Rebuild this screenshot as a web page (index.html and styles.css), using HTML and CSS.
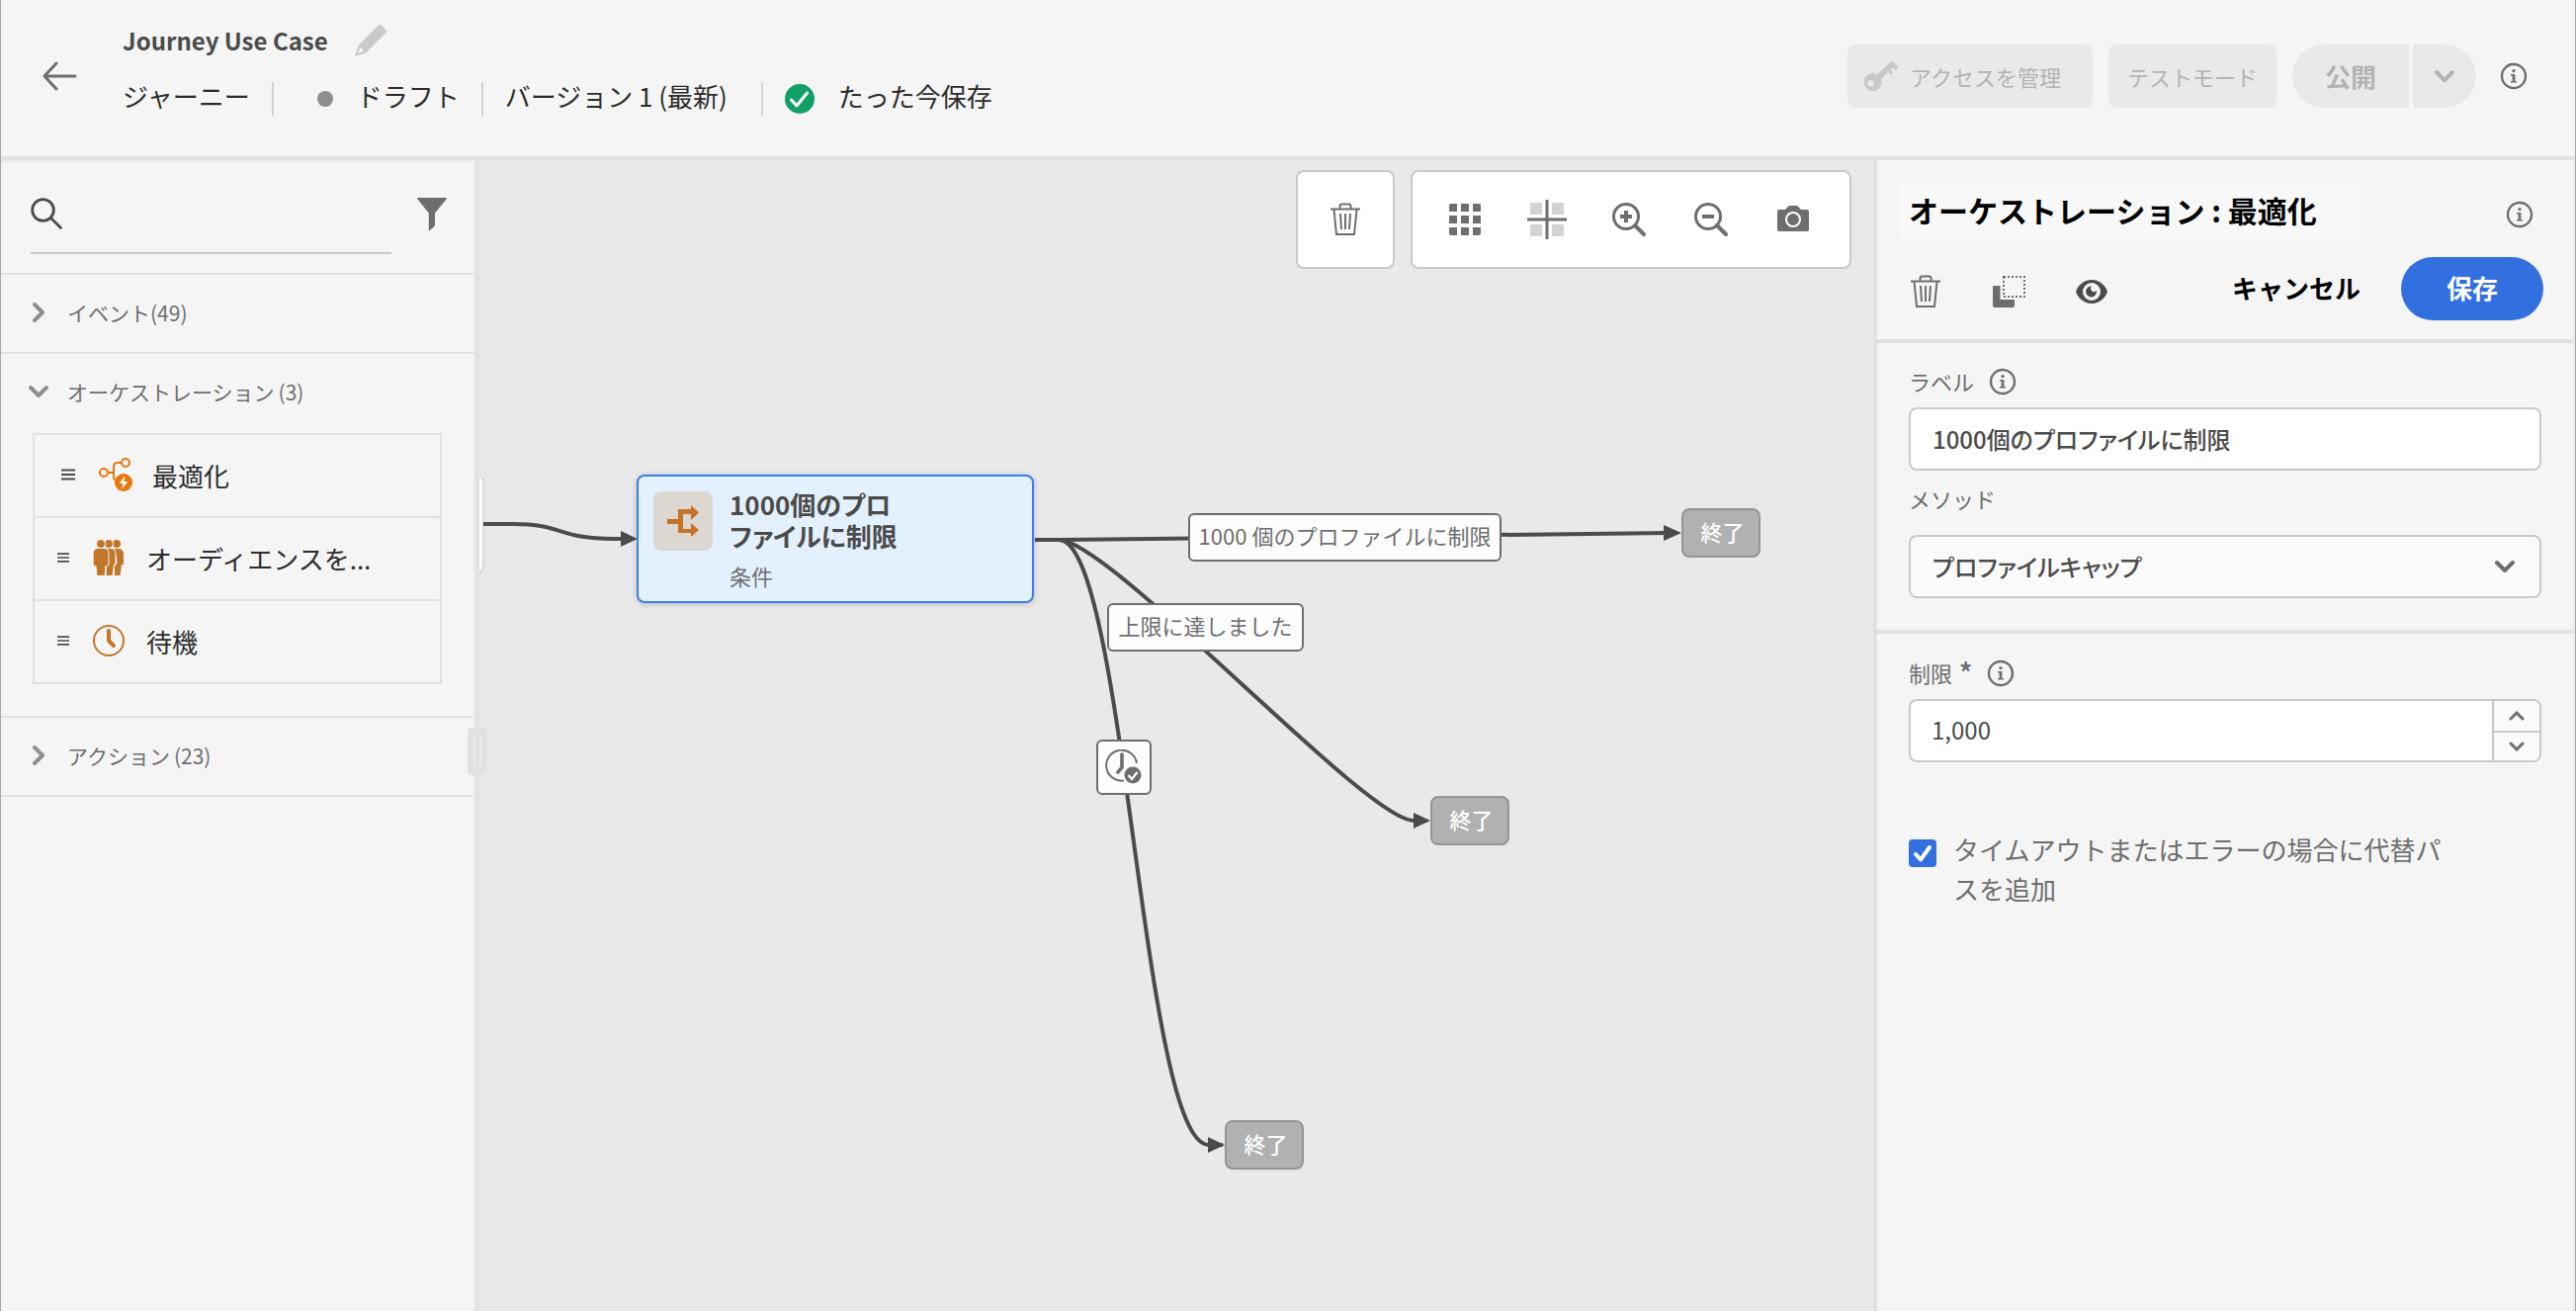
FILE: index.html
```html
<!DOCTYPE html>
<html lang="ja">
<head>
<meta charset="utf-8">
<title>Journey Use Case</title>
<meta name="viewport" content="width=device-width, initial-scale=1">
<link rel="stylesheet" href="styles.css">
</head>
<body>
<svg class="defs" aria-hidden="true">
  <symbol id="info" viewBox="0 0 28 28"><circle cx="14" cy="14" r="12" fill="none" stroke="currentColor" stroke-width="2.4"/><circle cx="14" cy="8.6" r="1.7" fill="currentColor"/><path d="M11 12h4.4v7H17v1.6h-6V19h1.6v-5.400H11z" fill="currentColor"/></symbol>
  <symbol id="trash" viewBox="0 0 32 34"><path d="M1 6.500h30M10.500 6V3.500a2 2 0 0 1 2-2h7a2 2 0 0 1 2 2V6M4.500 7l2.500 25h18l2.500-25M11 11l1 16M16 11v16M21 11l-1 16" fill="none" stroke="currentColor" stroke-width="2"/></symbol>
  <symbol id="chev-right" viewBox="0 0 14 22"><path d="M3 3l8 8-8 8" fill="none" stroke="currentColor" stroke-width="4" stroke-linecap="round" stroke-linejoin="round"/></symbol>
  <symbol id="chev-down" viewBox="0 0 22 14"><path d="M3 3l8 8 8-8" fill="none" stroke="currentColor" stroke-width="4" stroke-linecap="round" stroke-linejoin="round"/></symbol>
  <symbol id="grip" viewBox="0 0 14 12"><path d="M0 1.500h14M0 6h14M0 10.500h14" stroke="currentColor" stroke-width="2"/></symbol>
</svg>

<header class="topbar">
  <button class="icon-btn back" aria-label="戻る"><svg width="36" height="30" viewBox="0 0 36 30"><path d="M34 15H3M15 2L3 15l12 13" fill="none" stroke="currentColor" stroke-width="3" stroke-linecap="round" stroke-linejoin="round"/></svg></button>
  <div class="heading">
    <div class="title-row">
      <h1>Journey Use Case</h1>
      <button class="icon-btn pencil" aria-label="編集"><svg width="34" height="34" viewBox="0 0 34 34"><path d="M25 1.500a2 2 0 0 1 2.800 0l4.700 4.700a2 2 0 0 1 0 2.800L12 29.500 1 33l3.500-11zM6.500 23.500L4 30l6.500-2.500z" fill="currentColor" fill-rule="evenodd"/></svg></button>
    </div>
    <ul class="meta">
      <li>ジャーニー</li>
      <li class="draft"><span class="dot"></span>ドラフト</li>
      <li class="version">バージョン 1 (最新)</li>
      <li class="saved"><svg width="30" height="30" viewBox="0 0 30 30"><circle cx="15" cy="15" r="15" fill="#12a066"/><path d="M6.500 16l5.500 6L22.500 9" fill="none" stroke="#fff" stroke-width="3" stroke-linecap="round" stroke-linejoin="round"/></svg>たった今保存</li>
    </ul>
  </div>
  <div class="actions">
    <button class="btn access" disabled><svg width="36" height="32" viewBox="0 0 36 32"><path d="M9 13c1.800 0 3.300.4 4.700 1.300L28 1.200a1.500 1.500 0 0 1 2.200 0L35.500 7l-2.800 3-3-2.400-2.200 2 2.700 2.900-2.200 2-2.900-2.500-7 7A9 9 0 1 1 9 13zM7.500 20a3.200 3.200 0 1 0 0 6.400 3.200 3.200 0 0 0 0-6.400z" fill="#c9c9c9" fill-rule="evenodd"/></svg>アクセスを管理</button>
    <button class="btn test" disabled>テストモード</button>
    <div class="split">
      <button class="publish" disabled>公開</button>
      <button class="more" disabled aria-label="その他"><svg width="22" height="14"><use href="#chev-down"/></svg></button>
    </div>
    <button class="icon-btn" aria-label="情報"><svg width="28" height="28"><use href="#info"/></svg></button>
  </div>
</header>

<main class="workspace">
  <aside class="palette">
    <div class="search">
      <label class="search-field"><svg width="32" height="32" viewBox="0 0 32 32"><circle cx="12.500" cy="12.500" r="10.800" fill="none" stroke="#4b4b4b" stroke-width="2.800"/><path d="M20.500 20.500L30.500 30.500" stroke="#4b4b4b" stroke-width="2.800" stroke-linecap="round"/></svg><input type="search" aria-label="検索"></label>
      <button class="icon-btn" aria-label="フィルター"><svg width="30" height="34" viewBox="0 0 30 34"><path d="M.8 0h28.400a.8.800 0 0 1 .6 1.300L18 15.500v13L12.800 33a.6.600 0 0 1-1-.5v-17L.2 1.300A.8.800 0 0 1 .8 0z" fill="currentColor"/></svg></button>
    </div>
    <section class="group">
      <button class="group-head"><span class="chev"><svg width="14" height="22"><use href="#chev-right"/></svg></span>イベント<span>(49)</span></button>
    </section>
    <section class="group">
      <button class="group-head"><span class="chev"><svg width="22" height="14"><use href="#chev-down"/></svg></span>オーケストレーション<span class="count">(3)</span></button>
      <ul class="items">
        <li class="first"><svg class="grip" width="14" height="12"><use href="#grip"/></svg>
          <svg class="item-icon" width="36" height="36" viewBox="0 0 36 36"><g fill="none" stroke="#e8770e" stroke-width="2"><circle cx="5" cy="16" r="4"/><circle cx="27" cy="6" r="4"/><path d="M9 16h6M23 6h-4c-3 0-4 1.500-4 4v10c0 2 .5 3.500 2 4.500"/></g><circle cx="25" cy="26" r="9" fill="#e8770e"/><path d="M26.500 19.500l-6 7.500h4l-1.500 6 6.500-8h-4z" fill="#fff"/></svg>最適化</li>
        <li><svg class="grip" width="12" height="12"><use href="#grip"/></svg>
          <svg class="item-icon" width="32" height="38" viewBox="0 0 32 38"><g fill="#c27629"><circle cx="24" cy="5" r="4"/><path d="M22 10h3.500c3.500 0 5.500 2 5.500 5.500V26h-2l-1.500 11H22V27c2-1 2.500-2 2.500-5z"/></g><g fill="#c27629" stroke="#f5f5f5"><circle cx="16" cy="5" r="4.500"/><path d="M14 9.500h3c4 0 6 2 6 6V26h-1.500L20 37.500h-7z"/></g><g fill="#c27629"><circle cx="8" cy="5" r="4.500" stroke="#f5f5f5"/><path stroke="#f5f5f5" d="M5.500 9.500h5c4 0 5.500 2 5.500 6V26c0 1-1 1.500-3 1.500L12 37.500H4L3 27.500C1 27.500.2 27 .2 26V15.500c0-4 1.800-6 5.300-6z"/></g></svg>オーディエンスを...</li>
        <li><svg class="grip" width="12" height="12"><use href="#grip"/></svg>
          <svg class="item-icon" width="32" height="32" viewBox="0 0 32 32"><circle cx="16" cy="16" r="15" fill="none" stroke="#c27629" stroke-width="2"/><path d="M16 6v10l5 5" fill="none" stroke="#c27629" stroke-width="4" stroke-linecap="round" stroke-linejoin="round"/></svg>待機</li>
      </ul>
    </section>
    <section class="group last">
      <button class="group-head"><span class="chev"><svg width="14" height="22"><use href="#chev-right"/></svg></span>アクション<span class="count">(23)</span></button>
    </section>
    <div class="resize"></div>
  </aside>

  <section class="canvas">
    <svg class="edges" width="1410" height="1164" viewBox="485 162 1410 1164" aria-hidden="true">
      <g fill="none" stroke="#4b4b4b" stroke-width="4">
        <path d="M489 530h30C570 530 565 545 620 545h20"/>
        <path d="M1047 546h28L1690 539"/>
        <path d="M1071 546C1123 546 1382 830 1430 830h14"/>
        <path d="M1071 546C1139 546 1155 1158 1223 1158h14"/>
      </g>
      <g fill="#4b4b4b"><path d="M628 537l17 8-17 8zM1683 531l18 8-18 8zM1430 822l17 8-17 8zM1222 1150l17 8-17 8z"/></g>
    </svg>
    <div class="node previous"></div>
    <div class="node selected">
      <span class="node-icon"><svg width="32" height="32" viewBox="0 0 32 32"><path d="M0 14h11V4h13V0l8 7.500-8 7.500V9h-8v15h8v-6l8 7-8 7v-4H11v-9H0z" fill="#c5722a"/></svg></span>
      <div class="node-text"><strong>1000個のプロ<br>ファイルに制限</strong><span>条件</span></div>
    </div>
    <div class="edge-label limit">1000 個のプロファイルに制限</div>
    <div class="edge-label cap">上限に達しました</div>
    <div class="edge-label timeout"><svg width="38" height="36" viewBox="0 0 38 36"><path d="M19 31.500A15.500 15.500 0 1 1 32 14" fill="none" stroke="#6e6e6e" stroke-width="2"/><path d="M17 5v13l-4 5" fill="none" stroke="#6e6e6e" stroke-width="3.600" stroke-linecap="round"/><circle cx="28" cy="26" r="8.500" fill="#6e6e6e"/><path d="M23.500 26l3.500 4 5.500-7" fill="none" stroke="#fff" stroke-width="2.200"/></svg></div>
    <div class="end one">終了</div>
    <div class="end two">終了</div>
    <div class="end three">終了</div>

    <div class="toolbar">
      <div class="tools"><button class="icon-btn" aria-label="削除"><svg width="32" height="34"><use href="#trash"/></svg></button></div>
      <div class="tools wide">
        <button class="icon-btn" aria-label="グリッド"><svg width="32" height="32" viewBox="0 0 32 32" fill="currentColor"><path d="M2 0h6v8H0V2a2 2 0 0 1 2-2zM12 0h8v8h-8zM24 0h6a2 2 0 0 1 2 2v6h-8zM0 12h8v8H0zM12 12h8v8h-8zM24 12h8v8h-8zM0 24h8v8H2a2 2 0 0 1-2-2zM12 24h8v8h-8zM24 24h8v6a2 2 0 0 1-2 2h-6z"/></svg></button>
        <button class="icon-btn" aria-label="整列"><svg width="40" height="40" viewBox="0 0 40 40"><path d="M3 3h12v12H3zM25 3h12v12H25zM3 25h12v12H3zM25 25h12v12H25z" fill="#d3d3d3"/><path d="M20 0v40M0 20h40" stroke="#6e6e6e" stroke-width="3"/></svg></button>
        <button class="icon-btn" aria-label="ズームイン"><svg width="34" height="34" viewBox="0 0 34 34"><circle cx="14" cy="14" r="12.500" fill="none" stroke="currentColor" stroke-width="3"/><path d="M8 14h12M14 8v12" stroke="currentColor" stroke-width="4"/><path d="M23 23l9 9" stroke="currentColor" stroke-width="4" stroke-linecap="round"/></svg></button>
        <button class="icon-btn" aria-label="ズームアウト"><svg width="34" height="34" viewBox="0 0 34 34"><circle cx="14" cy="14" r="12.500" fill="none" stroke="currentColor" stroke-width="3"/><path d="M8 14h12" stroke="currentColor" stroke-width="4"/><path d="M23 23l9 9" stroke="currentColor" stroke-width="4" stroke-linecap="round"/></svg></button>
        <button class="icon-btn" aria-label="スクリーンショット"><svg width="32" height="32" viewBox="0 0 32 32"><path d="M2 6h6l3-3.200a2 2 0 0 1 1.500-.8h7a2 2 0 0 1 1.500.8L24 6h6a2 2 0 0 1 2 2v18a2 2 0 0 1-2 2H2a2 2 0 0 1-2-2V8a2 2 0 0 1 2-2z" fill="currentColor"/><circle cx="16" cy="16" r="7" fill="none" stroke="#fff" stroke-width="2"/></svg></button>
      </div>
    </div>
  </section>

  <aside class="props">
    <div class="props-head">
      <div class="props-title"><h2>オーケストレーション : 最適化</h2><button class="icon-btn" aria-label="情報"><svg width="28" height="28"><use href="#info"/></svg></button></div>
      <div class="props-actions">
        <button class="icon-btn" aria-label="削除"><svg width="32" height="34"><use href="#trash"/></svg></button>
        <button class="icon-btn copy" aria-label="コピー"><svg width="34" height="34" viewBox="0 0 34 34"><path d="M2 11h6.500v14H23v6a2 2 0 0 1-2 2H3a2 2 0 0 1-2-2V12a1 1 0 0 1 1-1z" fill="currentColor"/><path d="M12 2h21v20H12z" fill="none" stroke="currentColor" stroke-width="2" stroke-dasharray="2 2"/></svg></button>
        <button class="icon-btn eye" aria-label="表示"><svg width="32" height="24" viewBox="0 0 32 24"><path d="M16 0c8 0 14 6 16 12-2 6-8 12-16 12S2 18 0 12C2 6 8 0 16 0z" fill="#4b4b4b"/><circle cx="16" cy="12" r="9" fill="#f5f5f5"/><path d="M16 6.500a3 3 0 0 0 5 4.500A5.500 5.500 0 1 1 16 6.500z" fill="#4b4b4b"/></svg></button>
        <button class="cancel">キャンセル</button>
        <button class="save">保存</button>
      </div>
    </div>
    <div class="fields">
      <div class="label-row"><label for="label">ラベル</label><svg width="28" height="28"><use href="#info"/></svg></div>
      <input class="field" id="label" type="text" value="1000個のプロファイルに制限">
      <div class="label-row method"><label for="method">メソッド</label></div>
      <div class="select-wrap"><select class="field" id="method"><option>プロファイルキャップ</option></select><svg width="22" height="14"><use href="#chev-down"/></svg></div>
    </div>
    <div class="limits">
      <div class="label-row"><label for="limit">制限 <b>*</b></label><svg width="28" height="28"><use href="#info"/></svg></div>
      <div class="stepper field"><input id="limit" type="text" inputmode="numeric" value="1,000">
        <div class="steps"><button aria-label="増やす"><svg width="16" height="10" viewBox="0 0 16 10"><path d="M2 8l6-6 6 6" fill="none" stroke="currentColor" stroke-width="3" stroke-linecap="round"/></svg></button><button aria-label="減らす"><svg width="16" height="10" viewBox="0 0 16 10"><path d="M2 2l6 6 6-6" fill="none" stroke="currentColor" stroke-width="3" stroke-linecap="round"/></svg></button></div>
      </div>
      <label class="check"><span class="box"><input type="checkbox" checked><svg width="28" height="28" viewBox="0 0 28 28"><path d="M7 15l5 5.500L21 8" fill="none" stroke="#fff" stroke-width="4" stroke-linecap="round" stroke-linejoin="round"/></svg></span><span class="check-text">タイムアウトまたはエラーの場合に代替パスを追加</span></label>
    </div>
  </aside>
</main>
</body>
</html>
```
FILE: styles.css
```css
* { box-sizing: border-box; }
body {
  margin: 0;
  min-height: 100vh;
  display: flex;
  flex-direction: column;
  border: solid #a6a6a6;
  border-width: 0 1px;
  background: #f5f5f5;
  color: #2c2c2c;
  font-family: "Noto Sans CJK JP", "Noto Sans", sans-serif;
  font-size: 26px;
}
button, input, select { font: inherit; color: inherit; }
button { border: 0; padding: 0; background: none; }
h1, h2, ul { margin: 0; padding: 0; }
ul { list-style: none; }
svg { display: block; flex: none; }
.defs { position: absolute; width: 0; height: 0; }
.icon-btn { display: flex; align-items: center; justify-content: center; flex: none; color: #6e6e6e; }

/* Top bar */
.topbar { display: flex; align-items: center; min-height: 162px; padding: 0 48px 4px 41px; border-bottom: 4px solid #e1e1e1; }
.heading { margin-left: 46px; padding-bottom: 16px; }
.title-row { display: flex; align-items: center; gap: 26px; height: 40px; margin-bottom: 22px; }
h1 { font-size: 24px; line-height: 40px; font-weight: 700; color: #4b4b4b; }
.pencil { color: #c9c9c9; }
.meta { display: flex; height: 34px; line-height: 28px; }
.meta li { display: flex; padding-right: 22px; }
.meta li + li { border-left: 2px solid #d3d3d3; padding-left: 22px; }
.meta .draft { gap: 24px; padding-left: 44px; }
.meta .version { padding-right: 34px; }
.meta .saved { gap: 24px; }
.saved svg { margin-top: 2px; }
.dot { width: 16px; height: 16px; margin-top: 9px; border-radius: 50%; background: #8e8e8e; }
.actions { display: flex; align-items: center; gap: 16px; margin-left: auto; }
.btn { display: flex; align-items: center; justify-content: center; gap: 11px; width: 248px; height: 64px; border-radius: 8px; background: #e9e9e9; color: #b3b3b3; font-size: 22px; }
.access { justify-content: flex-start; padding-left: 16px; }
.test { width: 170px; }
.split { display: flex; gap: 4px; margin-right: 8px; color: #b3b3b3; }
.publish { width: 118px; height: 64px; padding-bottom: 2px; border-radius: 32px 0 0 32px; background: #e9e9e9; font-weight: 700; }
.more { display: flex; align-items: center; justify-content: center; width: 64px; height: 64px; border-radius: 0 32px 32px 0; background: #e9e9e9; }

.workspace { flex: 1; display: grid; grid-template-columns: 484px minmax(0, 1fr) 710px; }

/* Palette */
.palette { position: relative; border-right: 4px solid #e1e1e1; padding-top: 2px; box-shadow: inset -2px 2px 0 #e9e9e9; }
.search { display: flex; align-items: center; gap: 26px; height: 114px; padding: 0 27px 6px 30px; border-bottom: 2px solid #e1e1e1; margin-right: 2px; }
.search-field { display: flex; align-items: center; flex: 1; height: 76px; margin-top: 4px; border-bottom: 2px solid #c9c9c9; padding: 0 0 4px; }
.search-field input { flex: 1; min-width: 0; height: 48px; border: 0; background: none; outline: 0; }
.group { border-bottom: 2px solid #e1e1e1; margin-right: 2px; }
.group-head { display: flex; align-items: center; width: 100%; height: 78px; padding: 0 0 2px 27px; color: #6e6e6e; font-size: 21px; line-height: 30px; }
.chev { display: flex; justify-content: center; width: 22px; margin-right: 18px; color: #8e8e8e; }
.count { margin-left: 4px; }
.items { margin: 2px 32px 32px; border: 2px solid #e1e1e1; color: #2c2c2c; }
.items li { display: flex; align-items: center; height: 84px; padding: 0 0 2px 23px; }
.items li + li { border-top: 2px solid #e1e1e1; }
.items .first { height: 82px; padding-left: 27px; }
.grip { color: #4b4b4b; margin-right: 24px; }
.item-icon { margin-right: 22px; }
.first .item-icon { margin-right: 18px; }
.resize { position: absolute; top: 574px; right: -12px; z-index: 2; width: 20px; height: 48px; border-radius: 4px; background: #e1e1e1; }
.resize::before { content: ""; position: absolute; inset: 8px 6px; border: solid #e9e9e9; border-width: 0 2px; }

/* Canvas */
.canvas { position: relative; overflow: hidden; background: #e9e9e9; }
.edges { position: absolute; top: 0; left: 0; }
.toolbar { position: relative; display: flex; justify-content: flex-end; gap: 16px; padding: 10px 22px; }
.tools { display: flex; align-items: center; justify-content: center; width: 100px; height: 100px; border: 2px solid #c9c9c9; border-radius: 8px; background: #fff; }
.wide { width: 446px; gap: 43px; padding-right: 4px; }
.wide .icon-btn { width: 40px; }
.node { position: absolute; }
.previous { left: -20px; top: 318px; width: 23px; height: 100px; border-radius: 8px; background: #fff; box-shadow: 0 1px 4px rgba(0,0,0,.2); }
.selected { left: 159px; top: 318px; width: 402px; height: 130px; display: flex; gap: 17px; padding: 15px; border: 2px solid #3b7de9; border-radius: 8px; background: #e3f1ff; box-shadow: 0 1px 6px rgba(0,0,0,.2); }
.node-icon { display: flex; align-items: center; justify-content: center; width: 60px; height: 60px; border-radius: 8px; background: #dcd7d0; }
.node-text { font-feature-settings: "palt"; color: #4b4b4b; margin-top: -3px; }
.node-text strong { display: block; line-height: 32px; margin-bottom: 8px; }
.node-text span { display: block; font-size: 22px; line-height: 32px; color: #6e6e6e; }
.edge-label { position: absolute; display: flex; align-items: center; justify-content: center; height: 49px; padding-bottom: 5px; border: 2px solid #6e6e6e; border-radius: 6px; background: #fdfdfd; color: #6e6e6e; font-size: 22px; white-space: nowrap; }
.limit { left: 717px; top: 357px; width: 317px; }
.cap { left: 635px; top: 448px; width: 199px; }
.timeout { left: 624px; top: 586px; width: 56px; height: 56px; padding: 0; }
.end { position: absolute; display: flex; align-items: center; justify-content: center; width: 80px; height: 50px; padding: 0 0 4px 3px; border: 2px solid #959595; border-radius: 8px; background: #b1b1b1; color: #fff; font-size: 22px; font-weight: 500; }
.one { left: 1216px; top: 352px; }
.two { left: 962px; top: 643px; }
.three { left: 754px; top: 971px; }

/* Properties */
.props { border-left: 4px solid #e1e1e1; border-right: 2px solid #e9e9e9; }
.props-head { padding: 24px 30px 19px 23px; border-bottom: 4px solid #e1e1e1; }
.props-title { display: flex; align-items: center; justify-content: space-between; padding-right: 10px; }
.props-head .icon-btn { margin-top: 5px; }
h2 { padding: 0 43px 4px 9px; font-size: 30px; line-height: 52px; font-weight: 700; color: #000; background: #f8f8f8; }
.props-actions { display: flex; align-items: center; height: 64px; margin-top: 18px; padding-left: 10px; }
.copy { margin-left: 51px; }
.eye { margin-left: 51px; }
.cancel { margin-left: auto; padding-bottom: 4px; font-weight: 700; color: #000; }
.save { width: 144px; height: 64px; margin-left: 41px; padding-bottom: 4px; border-radius: 32px; background: #3270e0; color: #fff; font-weight: 700; }
.fields { padding: 22px 32px 32px; border-bottom: 4px solid #e1e1e1; }
.label-row { display: flex; align-items: center; gap: 15px; height: 34px; margin-bottom: 9px; font-size: 22px; line-height: 32px; color: #6e6e6e; }
.label-row label { padding-bottom: 2px; }
.label-row b { margin-left: 2px; font-size: 26px; line-height: 24px; }
.method { margin: 12px 0 19px; }
.field { display: block; width: 100%; height: 64px; padding: 0 22px 2px; border: 2px solid #c9c9c9; border-radius: 8px; background: #fff; color: #4b4b4b; font-size: 24px; font-weight: 500; font-feature-settings: "palt"; }
.select-wrap { position: relative; }
.select-wrap select { appearance: none; background: #fafafa; }
.select-wrap svg { position: absolute; right: 26px; top: 25px; color: #6e6e6e; pointer-events: none; }
.limits { padding: 23px 32px; }
.limits .label-row { margin-bottom: 9px; }
.stepper { display: flex; padding: 0; overflow: hidden; font-weight: 400; }
.stepper input { flex: 1; min-width: 0; padding: 0 21px 4px; border: 0; background: none; outline: 0; }
.steps { width: 48px; border-left: 2px solid #c9c9c9; background: #fafafa; color: #6e6e6e; }
.steps button { display: flex; align-items: center; justify-content: center; width: 100%; height: 30px; }
.steps button + button { border-top: 2px solid #c9c9c9; }
.check { display: flex; gap: 17px; margin-top: 68px; color: #6e6e6e; }
.box { display: grid; height: 28px; margin-top: 10px; }
.box > * { grid-area: 1 / 1; }
.box input { appearance: none; width: 28px; height: 28px; margin: 0; border-radius: 4px; background: #3270e0; }
.box svg { pointer-events: none; z-index: 1; }
.check-text { flex: 1; max-width: 510px; line-height: 40px; }
```
